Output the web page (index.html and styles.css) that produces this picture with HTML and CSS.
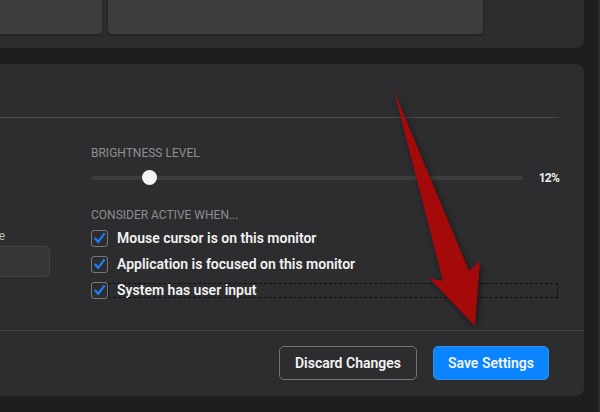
FILE: index.html
```
<!DOCTYPE html>
<html>
<head>
  <meta charset="utf-8">
  <title>Monitor Settings</title>
  <link rel="stylesheet" href="styles.css">
</head>
<body>
  <div class="page">
    <section class="panel top-panel">
      <div class="card card-a"></div>
      <div class="card card-b"></div>
    </section>

    <section class="panel settings">
      <header class="settings-head"></header>

      <div class="settings-body">
        <div class="col-left">
          <div class="field-label">Inactive mode</div>
          <div class="field-input"></div>
        </div>

        <div class="col-right">
          <div class="caption">Brightness level</div>
          <div class="slider-row">
            <div class="slider">
              <div class="track"></div>
              <div class="thumb" style="--value: 0.12"></div>
            </div>
            <span class="slider-value">12%</span>
          </div>

          <div class="caption caption-checks">Consider active when...</div>
          <ul class="checks">
            <li>
              <span class="box"><svg viewBox="0 0 17 17"><path d="M3.8 9 L7.2 12.8 L13.6 4.4"/></svg></span>
              <span class="check-label">Mouse cursor is on this monitor</span>
            </li>
            <li>
              <span class="box"><svg viewBox="0 0 17 17"><path d="M3.8 9 L7.2 12.8 L13.6 4.4"/></svg></span>
              <span class="check-label">Application is focused on this monitor</span>
            </li>
            <li>
              <span class="box"><svg viewBox="0 0 17 17"><path d="M3.8 9 L7.2 12.8 L13.6 4.4"/></svg></span>
              <span class="check-label focused">System has user input</span>
            </li>
          </ul>
        </div>
      </div>

      <footer class="settings-foot">
        <button class="btn btn-ghost">Discard Changes</button>
        <button class="btn btn-primary">Save Settings</button>
      </footer>
    </section>
  </div>

  <!-- annotation arrow drawn over the screenshot -->
  <svg class="arrow" viewBox="0 0 600 412">
    <polygon points="394,91 469,271 480,261 475,326 429,278 443,281"/>
  </svg>
</body>
</html>
```

FILE: styles.css
```
body {
  margin: 0;
  width: 600px;
  height: 412px;
  overflow: hidden;
  position: relative;
  background: #1e1e20;
  font-family: Roboto, "Noto Sans", sans-serif;
  box-shadow: inset -2px 0 0 #2a2a2c;
}
.page {
  margin-left: -100px;
  width: 684px;
}
.panel {
  background: #2d2d2f;
  border-radius: 8px;
}

/* top strip with cards */
.top-panel {
  margin-top: -20px;
  height: 68px;
  box-sizing: border-box;
  padding: 0 0 14px 24px;
  display: flex;
  align-items: flex-end;
  gap: 6px;
}
.card {
  height: 54px;
  background: #3d3d3f;
  border-radius: 4px;
  box-shadow: 0 1px 3px rgba(0,0,0,0.35);
}
.card-a { width: 178px; }
.card-b { width: 375px; }

/* settings panel */
.settings {
  margin-top: 16px;
  height: 332px;
  display: flex;
  flex-direction: column;
}
.settings-head {
  height: 54px;
  box-sizing: border-box;
  margin-right: 25px;
  border-bottom: 1px solid #4a4a4c;
}
.settings-body {
  flex: 1;
  display: grid;
  grid-template-columns: 126px 1fr;
  gap: 41px;
  padding: 0 25px 0 24px;
}
.col-left { padding-top: 111px; }
.field-label {
  padding-left: 6px;
  font-size: 12px;
  line-height: 14px;
  white-space: nowrap;
  color: #b8b8b8;
  margin-bottom: 3px;
}
.field-input {
  height: 31px;
  box-sizing: border-box;
  background: #353537;
  border: 1px solid #424244;
  border-radius: 5px;
}
.col-right { padding-top: 28px; }
.caption {
  font-size: 12px;
  line-height: 14px;
  text-transform: uppercase;
  color: #8e8e90;
}
.caption-checks { margin-top: 20px; }

.slider-row {
  margin-top: 8px;
  height: 20px;
  display: flex;
  align-items: center;
  gap: 16px;
}
.slider {
  flex: 1;
  height: 20px;
  position: relative;
}
.track {
  position: absolute;
  left: 0;
  right: 0;
  top: 8px;
  height: 4px;
  border-radius: 2px;
  background: #3d3d3f;
}
.thumb {
  position: absolute;
  top: 2px;
  left: calc((100% - 15px) * var(--value) + 1px);
  width: 15px;
  height: 15px;
  border-radius: 50%;
  background: #f4f4f4;
}
.slider-value {
  font-size: 12px;
  font-weight: 700;
  letter-spacing: -0.8px;
  color: #ececec;
}

.checks {
  list-style: none;
  margin: 7px 0 0;
  padding: 0;
  display: flex;
  flex-direction: column;
  gap: 8px;
}
.checks li {
  display: flex;
  align-items: center;
  height: 18px;
}
.box {
  width: 17px;
  height: 17px;
  box-sizing: border-box;
  border: 1.5px solid #78787a;
  border-radius: 3px;
  display: flex;
}
.box svg {
  width: 17px;
  height: 17px;
  margin: -1.5px;
  fill: none;
  stroke: #1a82ff;
  stroke-width: 2.2;
}
.check-label {
  flex: 1;
  margin: 0 2px 0 1px;
  padding-left: 8px;
  font-size: 14px;
  line-height: 13px;
  font-weight: 600;
  color: #f2f2f2;
}
.check-label.focused { outline: 1px dashed #111; }

.settings-foot {
  border-top: 1px solid #454547;
  padding: 15px 35px 16px;
  display: flex;
  justify-content: flex-end;
  gap: 16px;
}
.btn {
  height: 34px;
  padding: 0 15px;
  border-radius: 5px;
  font-family: inherit;
  font-size: 14px;
  font-weight: 600;
  color: #f4f4f4;
  cursor: pointer;
}
.btn-ghost {
  background: transparent;
  border: 1px solid #747476;
}
.btn-primary {
  padding: 0 14px;
  background: #0a84ff;
  border: 1px solid #3a8ee0;
}

.arrow {
  position: absolute;
  left: 0;
  top: 0;
  width: 600px;
  height: 412px;
  pointer-events: none;
  fill: #a50a0b;
  filter: drop-shadow(2px 3px 3px rgba(0,0,0,0.45));
}
```
